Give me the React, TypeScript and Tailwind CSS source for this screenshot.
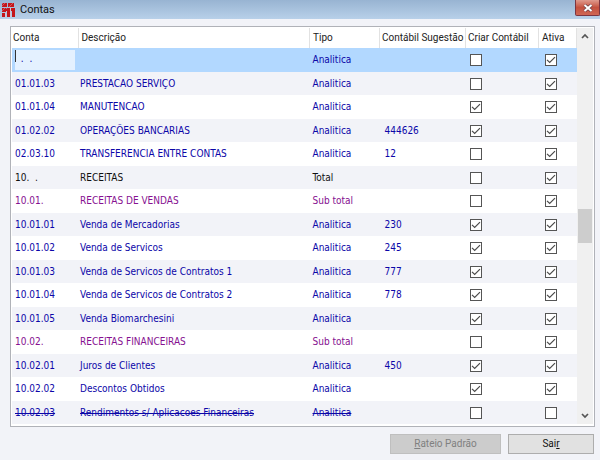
import { useState } from 'react';

type Kind = 'Analitica' | 'Total' | 'Sub total';

type Account = {
  code: string;
  name: string;
  kind: Kind;
  suggestion?: string;
  create: boolean;
  active: boolean;
};

const accounts: Account[] = [
  { code: '', name: '', kind: 'Analitica', create: false, active: true },
  { code: '01.01.03', name: 'PRESTACAO SERVIÇO', kind: 'Analitica', create: false, active: true },
  { code: '01.01.04', name: 'MANUTENCAO', kind: 'Analitica', create: true, active: true },
  { code: '01.02.02', name: 'OPERAÇÕES BANCARIAS', kind: 'Analitica', suggestion: '444626', create: true, active: true },
  { code: '02.03.10', name: 'TRANSFERENCIA ENTRE CONTAS', kind: 'Analitica', suggestion: '12', create: false, active: true },
  { code: '10.  .', name: 'RECEITAS', kind: 'Total', create: false, active: true },
  { code: '10.01.', name: 'RECEITAS DE VENDAS', kind: 'Sub total', create: false, active: true },
  { code: '10.01.01', name: 'Venda de Mercadorias', kind: 'Analitica', suggestion: '230', create: true, active: true },
  { code: '10.01.02', name: 'Venda de Servicos', kind: 'Analitica', suggestion: '245', create: true, active: true },
  { code: '10.01.03', name: 'Venda de Servicos de Contratos 1', kind: 'Analitica', suggestion: '777', create: true, active: true },
  { code: '10.01.04', name: 'Venda de Servicos de Contratos 2', kind: 'Analitica', suggestion: '778', create: true, active: true },
  { code: '10.01.05', name: 'Venda Biomarchesini', kind: 'Analitica', create: true, active: true },
  { code: '10.02.', name: 'RECEITAS FINANCEIRAS', kind: 'Sub total', create: false, active: true },
  { code: '10.02.01', name: 'Juros de Clientes', kind: 'Analitica', suggestion: '450', create: true, active: true },
  { code: '10.02.02', name: 'Descontos Obtidos', kind: 'Analitica', create: true, active: true },
  { code: '10.02.03', name: 'Rendimentos s/ Aplicacoes Financeiras', kind: 'Analitica', create: false, active: false },
];

const kindColor: Record<Kind, string> = {
  Analitica: 'text-[#0c06a8]',
  Total: 'text-[#101010]',
  'Sub total': 'text-[#861090]',
};

function Logo() {
  return (
    <svg width="13" height="15" viewBox="0 0 13 15" aria-hidden="true">
      <path d="M1 1h4v4H0V2zM6 1h6v4H6zM0 6h4v4H0zM0 11h3v4H0z" fill="#c4161c" />
      <path d="M0 4l3-3M7 5l4-4M0 9l3-3" stroke="#d8707a" strokeWidth="0.7" />
      <path d="M5 6h3v9H5V9H4V7zM9 6h4v9h-3V9H9z" fill="#c4161c" />
      <path d="M4 10h1M3.5 11v4M8.5 6v9" stroke="#dfc4d2" strokeWidth="0.8" />
    </svg>
  );
}

function Check({ label, checked }: { label: string; checked: boolean }) {
  const [on, setOn] = useState(checked);
  return (
    <label className="grid h-3 w-3">
      <input
        type="checkbox"
        aria-label={label}
        checked={on}
        onChange={() => setOn(!on)}
        className="col-start-1 row-start-1 h-3 w-3 appearance-none border border-[#555] bg-white"
      />
      {on && (
        <svg className="pointer-events-none col-start-1 row-start-1" width="12" height="12" viewBox="0 0 12 12" fill="none" stroke="#4a4a4a" strokeWidth="1.2">
          <path d="M2 5.8l2.7 2.7L10 3.2" />
        </svg>
      )}
    </label>
  );
}

function Scrollbar() {
  return (
    <div className="flex w-4 shrink-0 flex-col bg-[#f0f0f0]">
      <button type="button" aria-label="Rolar para cima" className="grid h-4 place-items-center">
        <svg width="8" height="6" viewBox="0 0 8 6" fill="none" stroke="#555" strokeWidth="1.7">
          <path d="M1 5l3-3 3 3" />
        </svg>
      </button>
      <div className="grow" />
      <div className="mx-px h-[34px] bg-[#cdcdcd]" />
      <div className="grow" />
      <button type="button" aria-label="Rolar para baixo" className="grid h-4 place-items-center">
        <svg width="8" height="6" viewBox="0 0 8 6" fill="none" stroke="#555" strokeWidth="1.7">
          <path d="M1 1l3 3 3-3" />
        </svg>
      </button>
    </div>
  );
}

function Row({ account, selected }: { account: Account; selected: boolean }) {
  const { code, name, kind, suggestion, create, active } = account;
  const label = name || 'Nova conta';
  return (
    <tr
      className={`h-6 even:h-[23px] ${kindColor[kind]} ${selected ? 'bg-[#b2d8ff]' : 'odd:bg-white even:bg-[#f2f3f8]'} ${active ? '' : 'line-through'}`}
    >
      <td className="whitespace-pre pl-[3px]">
        {selected ? (
          <div className="relative mr-[3px]">
            <input
              aria-label="Conta"
              defaultValue=" .  ."
              className="block h-5 w-full bg-[#e4f1ff] pb-1 pl-[3px] outline-none"
            />
            <span className="absolute left-0 top-0 h-3 w-px bg-[#333]" />
          </div>
        ) : (
          code
        )}
      </td>
      <td className="truncate pl-0.5">{name}</td>
      <td className="pl-[3px]">{kind}</td>
      <td className="pl-[5px]">{suggestion}</td>
      <td className="pl-1"><Check label={`Criar contábil: ${label}`} checked={create} /></td>
      <td className="pl-1.5"><Check label={`Ativa: ${label}`} checked={active} /></td>
    </tr>
  );
}

export default function App() {
  return (
    <main className="flex min-h-screen flex-col bg-[#f2f3f8] font-['DejaVu_Sans_Condensed','DejaVu_Sans',sans-serif] text-[10px] leading-4">
      <header className="flex h-[19px] items-center bg-linear-to-b from-[#98b4d2] to-[#b8d0e9] pl-0.5">
        <Logo />
        <h1 className="ml-[5px] grow font-[Roboto,sans-serif] text-[11px] text-[#111]">Contas</h1>
        <button
          type="button"
          aria-label="Fechar"
          className="grid h-4 w-[25px] place-items-center self-start rounded-b-xs border border-t-0 border-[#7c3540] bg-linear-to-b from-[#df9a8e] via-[#c4513f] via-50% to-[#cf6654]"
        >
          <svg width="10" height="8" viewBox="0 0 10 8">
            <path d="M1.5 1l7 6M8.5 1l-7 6" stroke="#6b4048" strokeWidth="3.4" />
            <path d="M1.5 1l7 6M8.5 1l-7 6" stroke="#fff" strokeWidth="2" />
          </svg>
        </button>
      </header>

      <section className="ml-2.5 mr-[5px] mt-[7px] flex border border-[#b0b2b8] bg-white p-px pb-0.5">
        <table className="min-w-0 grow table-fixed border-collapse text-left">
          <colgroup>
            <col className="w-[66px]" />
            <col />
            <col className="w-[70px]" />
            <col className="w-[86px]" />
            <col className="w-[73px]" />
            <col className="w-[38px]" />
          </colgroup>
          <thead className="font-[Roboto,sans-serif] text-[#222]">
            <tr className="h-5 whitespace-nowrap *:border-r *:border-[#e2e2e2] *:font-normal">
              <th className="pl-px">Conta</th>
              <th className="pl-[3px]">Descrição</th>
              <th className="pl-[3px]">Tipo</th>
              <th className="pl-0.5">Contábil Sugestão</th>
              <th className="pl-0.5">Criar Contábil</th>
              <th className="pl-[3px]">Ativa</th>
            </tr>
          </thead>
          <tbody>
            {accounts.map((account, i) => (
              <Row key={account.code} account={account} selected={i === 0} />
            ))}
          </tbody>
        </table>
        <Scrollbar />
      </section>

      <footer className="mt-[7px] flex justify-end gap-[7px] pr-1.5 font-[Roboto,sans-serif]">
        <button type="button" disabled className="h-5 w-[111px] border border-[#bfbfbf] bg-[#cccccc] text-[#808080]">
          <span className="underline">R</span>ateio Padrão
        </button>
        <button type="button" className="h-5 w-[86px] border border-[#adadad] bg-[#e1e1e1] text-[#111]">
          Sai<span className="underline">r</span>
        </button>
      </footer>
    </main>
  );
}
